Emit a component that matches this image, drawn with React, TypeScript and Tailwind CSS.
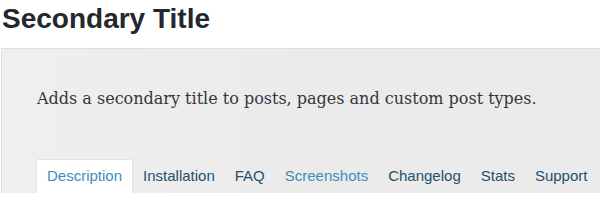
import React from 'react'

const tabs = [
    { label: 'Description', active: true, light: true },
    { label: 'Installation' },
    { label: 'FAQ' },
    { label: 'Screenshots', light: true },
    { label: 'Changelog' },
    { label: 'Stats' },
    { label: 'Support' },
]

export default function App() {
    return (
        <div className="w-[600px] h-[209px] bg-white overflow-hidden">
            {/* Plugin title */}
            <h1 className="pl-[2px] pt-[3px] h-[48px] text-[28px] leading-[32px] font-bold text-[#23282d] font-['Liberation_Sans',Arial,sans-serif]">
                Secondary Title
            </h1>

            {/* Header panel */}
            <div className="ml-[1px] h-[145px] border-t border-l border-[#dedede] bg-gradient-to-r from-[#efefef] via-[#ebebeb] to-[#ebebeb] flex flex-col">
                <p className="pl-[35px] pt-[39px] text-[16px] leading-[22px] text-[#32373c] font-['DejaVu_Serif',Georgia,serif]">
                    Adds a secondary title to posts, pages and custom post types.
                </p>

                <div className="mt-auto flex pl-[34px] font-['Liberation_Sans',Arial,sans-serif] text-[15px]">
                    {tabs.map(tab => (
                        <div
                            key={tab.label}
                            className={`h-[34px] px-[10px] flex items-center rounded-t-[2px] ${tab.active ? 'bg-white border-t border-l border-r border-[#e2e2e2]' : ''} ${tab.light ? 'text-[#3d8db8]' : 'text-[#24506f]'}`}
                        >
                            {tab.label}
                        </div>
                    ))}
                </div>
            </div>
        </div>
    )
}
